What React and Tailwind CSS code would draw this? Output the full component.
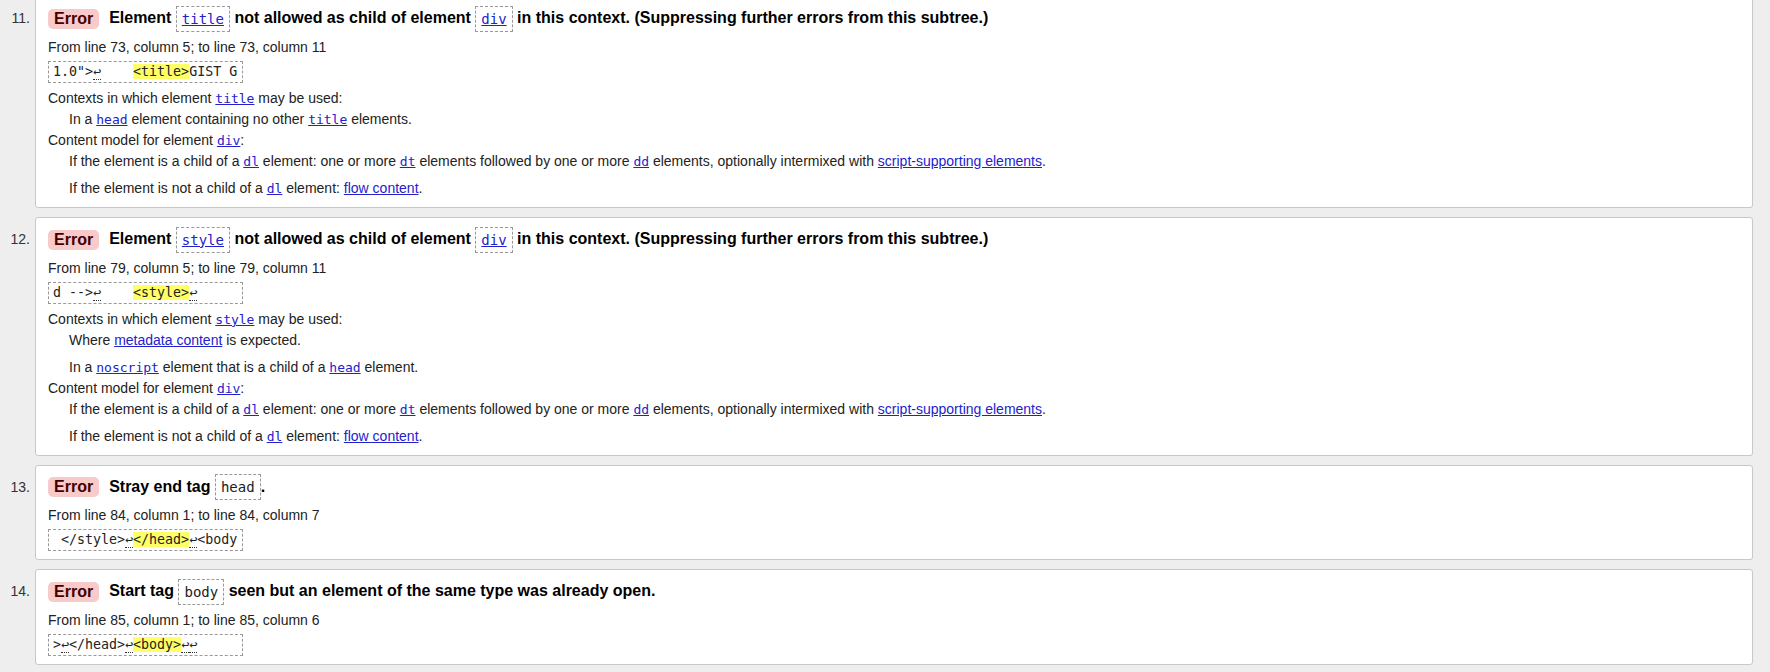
import React from 'react';

const MONO = "font-['DejaVu_Sans_Mono','Liberation_Mono',monospace]";

/**
 * Inline pieces
 */
const Badge = () => (
    <span className="inline-block align-middle rounded-[5px] bg-[#f9caca] px-[6px] mr-[10px] text-[16px] leading-[20px] font-bold text-[#400]">
        Error
    </span>
);

const Tag = ({ children, link }) => (
    <code
        className={`inline-block align-middle border border-dashed border-[#999] px-[5px] py-[3px] text-[14px] leading-[18px] font-normal ${MONO} ${
            link ? 'text-[#22c] underline' : 'text-[#222]'
        }`}
    >
        {children}
    </code>
);

const L = ({ children }) => <a className={`text-[#22c] underline text-[13px] ${MONO}`}>{children}</a>;
const A = ({ children }) => <a className="text-[#22c] underline">{children}</a>;

const Br = () => <span className="border-b border-dotted border-[#333]">↩</span>;
const Hl = ({ children }) => <span className="bg-[#ffff66]">{children}</span>;

const DivModel = () => (
    <>
        <dt>
            Content model for element <L>div</L>:
        </dt>
        <dd className="pl-[21px] flex flex-col gap-[6px]">
            <p>
                If the element is a child of a <L>dl</L> element: one or more <L>dt</L> elements followed by one or more{' '}
                <L>dd</L> elements, optionally intermixed with <A>script-supporting elements</A>.
            </p>
            <p>
                If the element is not a child of a <L>dl</L> element: <A>flow content</A>.
            </p>
        </dd>
    </>
);

/**
 * One message card
 */
const Message = ({ num, title, from, code, children }) => (
    <li className="flex items-start">
        <span className="w-[35px] shrink-0 pr-[5px] pt-[9px] text-right text-[14px] leading-[26px] text-[#333]">{num}.</span>
        <div className="flex-1 mr-[17px] bg-white border border-[#c8c8c8] rounded-[3px] pl-[12px] pr-4 pt-[8px] pb-[8px]">
            <p className="text-[16px] leading-[26px] font-bold text-black">
                <Badge />
                {title}
            </p>
            <p className="mt-[5px] text-[14px] leading-[20px] text-[#222]">{from}</p>
            <pre
                className={`mt-[4px] w-[195px] border border-dashed border-[#999] px-[4px] py-[2px] text-[13.3px] leading-[16px] text-[#222] whitespace-pre ${MONO}`}
            >
                {code}
            </pre>
            {children && <dl className="mt-[5px] text-[14px] leading-[21px] text-[#222]">{children}</dl>}
        </div>
    </li>
);

/**
 * Main App Component
 */
function App() {
    return (
        <div className="h-[672px] overflow-hidden bg-[#eeeeee] font-['Liberation_Sans',Arial,sans-serif]">
            <ol className="-mt-[4px] flex flex-col gap-[9px]">
                <Message
                    num={11}
                    title={
                        <>
                            Element <Tag link>title</Tag> not allowed as child of element <Tag link>div</Tag> in this context.
                            (Suppressing further errors from this subtree.)
                        </>
                    }
                    from="From line 73, column 5; to line 73, column 11"
                    code={
                        <>
                            1.0"&gt;<Br />
                            {'    '}
                            <Hl>&lt;title&gt;</Hl>GIST G
                        </>
                    }
                >
                    <dt>
                        Contexts in which element <L>title</L> may be used:
                    </dt>
                    <dd className="pl-[21px] flex flex-col gap-[6px]">
                        <p>
                            In a <L>head</L> element containing no other <L>title</L> elements.
                        </p>
                    </dd>
                    <DivModel />
                </Message>

                <Message
                    num={12}
                    title={
                        <>
                            Element <Tag link>style</Tag> not allowed as child of element <Tag link>div</Tag> in this context.
                            (Suppressing further errors from this subtree.)
                        </>
                    }
                    from="From line 79, column 5; to line 79, column 11"
                    code={
                        <>
                            d --&gt;<Br />
                            {'    '}
                            <Hl>&lt;style&gt;</Hl>
                            <Br />
                        </>
                    }
                >
                    <dt>
                        Contexts in which element <L>style</L> may be used:
                    </dt>
                    <dd className="pl-[21px] flex flex-col gap-[6px]">
                        <p>
                            Where <A>metadata content</A> is expected.
                        </p>
                        <p>
                            In a <L>noscript</L> element that is a child of a <L>head</L> element.
                        </p>
                    </dd>
                    <DivModel />
                </Message>

                <Message
                    num={13}
                    title={
                        <>
                            Stray end tag <Tag>head</Tag>.
                        </>
                    }
                    from="From line 84, column 1; to line 84, column 7"
                    code={
                        <>
                            {' '}&lt;/style&gt;<Br />
                            <Hl>&lt;/head&gt;</Hl>
                            <Br />
                            &lt;body
                        </>
                    }
                />

                <Message
                    num={14}
                    title={
                        <>
                            Start tag <Tag>body</Tag> seen but an element of the same type was already open.
                        </>
                    }
                    from="From line 85, column 1; to line 85, column 6"
                    code={
                        <>
                            &gt;<Br />
                            &lt;/head&gt;<Br />
                            <Hl>&lt;body&gt;</Hl>
                            <Br />
                            <Br />
                        </>
                    }
                />
            </ol>
        </div>
    );
}

export default App;
